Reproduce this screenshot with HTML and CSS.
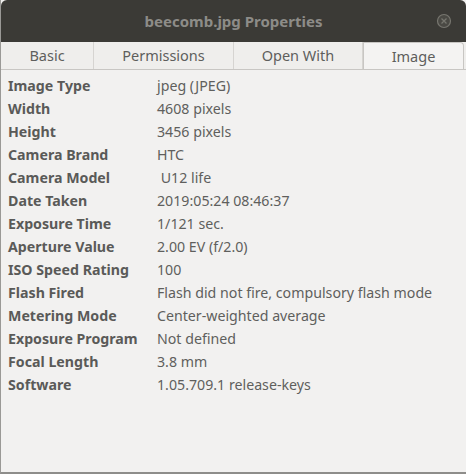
FILE: index.html
```html
<!DOCTYPE html>
<html>
<head>
<meta charset="utf-8">
<link rel="stylesheet" href="styles.css">
</head>
<body>
<div class="window">
  <div class="titlebar">
    <span class="title">beecomb.jpg Properties</span>
    <svg class="close" width="16" height="16" viewBox="0 0 16 16">
      <circle cx="8" cy="8" r="6.5" fill="#4a4944" stroke="#77766f" stroke-width="1.2"/>
      <path d="M5.5 5.5 L10.5 10.5 M10.5 5.5 L5.5 10.5" stroke="#77766f" stroke-width="1.3"/>
    </svg>
  </div>
  <div class="tabs">
    <div class="tab t1">Basic</div>
    <div class="tab t2">Permissions</div>
    <div class="tab t3">Open With</div>
    <div class="tab t4 active">Image</div>
  </div>
  <div class="content">
    <div class="row"><span class="k">Image Type</span><span class="v">jpeg (JPEG)</span></div>
    <div class="row"><span class="k">Width</span><span class="v">4608 pixels</span></div>
    <div class="row"><span class="k">Height</span><span class="v">3456 pixels</span></div>
    <div class="row"><span class="k">Camera Brand</span><span class="v">HTC</span></div>
    <div class="row"><span class="k">Camera Model</span><span class="v">&nbsp;U12 life</span></div>
    <div class="row"><span class="k">Date Taken</span><span class="v">2019:05:24 08:46:37</span></div>
    <div class="row"><span class="k">Exposure Time</span><span class="v">1/121 sec.</span></div>
    <div class="row"><span class="k">Aperture Value</span><span class="v">2.00 EV (f/2.0)</span></div>
    <div class="row"><span class="k">ISO Speed Rating</span><span class="v">100</span></div>
    <div class="row"><span class="k">Flash Fired</span><span class="v">Flash did not fire, compulsory flash mode</span></div>
    <div class="row"><span class="k">Metering Mode</span><span class="v">Center-weighted average</span></div>
    <div class="row"><span class="k">Exposure Program</span><span class="v">Not defined</span></div>
    <div class="row"><span class="k">Focal Length</span><span class="v">3.8 mm</span></div>
    <div class="row"><span class="k">Software</span><span class="v">1.05.709.1 release-keys</span></div>
  </div>
</div>
</body>
</html>
```

FILE: styles.css
```css
html, body {
  margin: 0;
  padding: 0;
  background: #f2f1f0;
}
.window {
  width: 466px;
  height: 474px;
  box-sizing: border-box;
  border-left: 1px solid #9a9996;
  border-bottom: 2px solid #8e8d8a;
  background: #f2f1f0;
  display: flex;
  flex-direction: column;
  font-family: "Noto Sans", "DejaVu Sans", sans-serif;
  overflow: hidden;
}
.titlebar {
  height: 42px;
  flex: none;
  background: #3b3a36;
  border-radius: 6px 6px 0 0;
  display: flex;
  align-items: center;
  justify-content: center;
  position: relative;
}
.title {
  color: #8d8c88;
  font-weight: bold;
  font-size: 15px;
}
.close {
  position: absolute;
  right: 14px;
  top: 13px;
}
.tabs {
  height: 27px;
  flex: none;
  display: flex;
  border-bottom: 1px solid #c8c6c3;
  background: #efeeec;
}
.tab {
  box-sizing: border-box;
  display: flex;
  align-items: center;
  justify-content: center;
  font-size: 14.5px;
  color: #5e5e5c;
  border-right: 1px solid #d6d4d1;
  padding-bottom: 1px;
}
.t1 { width: 93px; }
.t2 { width: 140px; }
.t3 { width: 129px; }
.t4 { width: 101px; }
.tab.active {
  background: #f4f3f2;
  border: 1px solid #c8c6c3;
  border-bottom: none;
  border-radius: 0 4px 0 0;
  padding-top: 1px;
}
.content {
  padding: 4px 0 0 7px;
  display: flex;
  flex-direction: column;
}
.row {
  display: flex;
  align-items: center;
  height: 23px;
  font-size: 14.2px;
  white-space: nowrap;
}
.k {
  width: 149px;
  flex: none;
  font-weight: bold;
  color: #5a5a58;
}
.v {
  color: #5f5f5d;
}
```
